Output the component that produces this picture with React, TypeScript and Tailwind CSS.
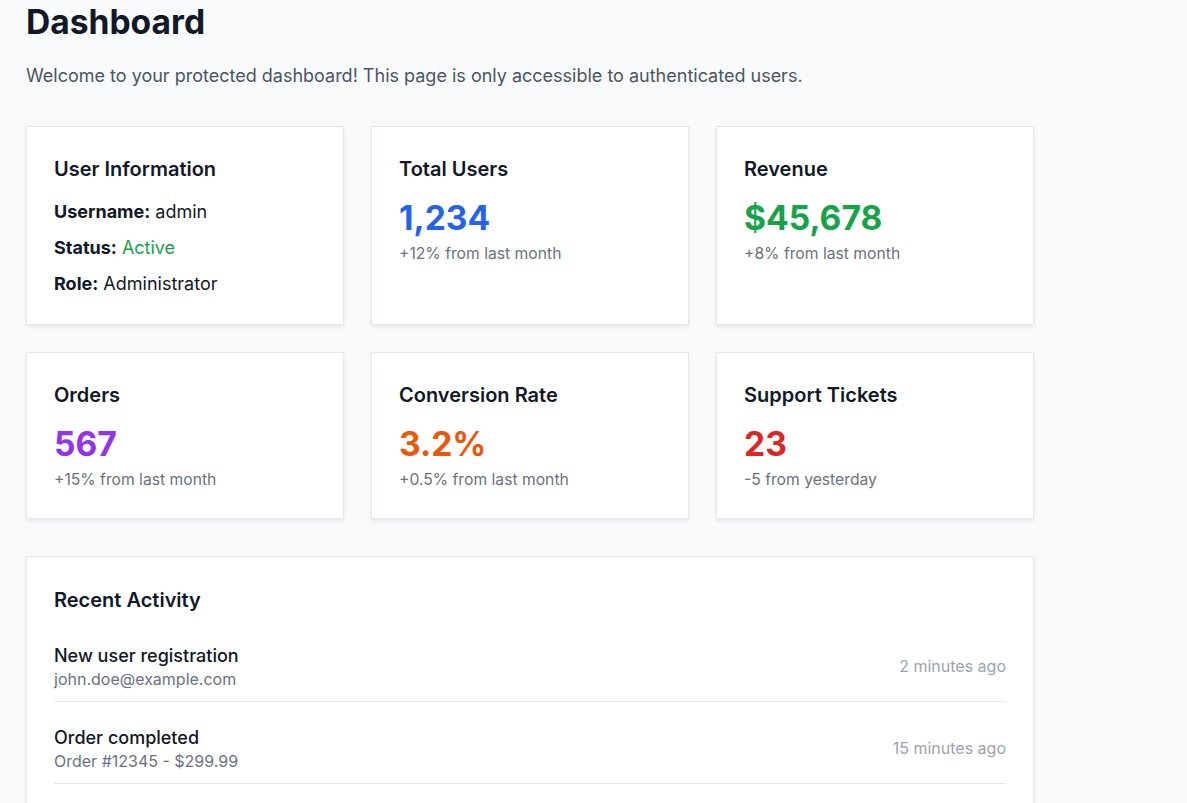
import React from "react";

type Stat = {
  title: string;
  value: string;
  note: string;
  color: string;
};

const topStats: Stat[] = [
  { title: "Total Users", value: "1,234", note: "+12% from last month", color: "text-[#2563eb]" },
  { title: "Revenue", value: "$45,678", note: "+8% from last month", color: "text-[#16a34a]" },
];

const bottomStats: Stat[] = [
  { title: "Orders", value: "567", note: "+15% from last month", color: "text-[#9333ea]" },
  { title: "Conversion Rate", value: "3.2%", note: "+0.5% from last month", color: "text-[#ea580c]" },
  { title: "Support Tickets", value: "23", note: "-5 from yesterday", color: "text-[#dc2626]" },
];

const activity = [
  { title: "New user registration", sub: "john.doe@example.com", time: "2 minutes ago" },
  { title: "Order completed", sub: "Order #12345 - $299.99", time: "15 minutes ago" },
];

const card = "bg-white border border-[#e5e7eb] shadow-[0_2px_4px_rgba(0,0,0,0.08)] p-[27px]";

const StatCard: React.FC<{ stat: Stat }> = ({ stat }) => (
  <div className={`${card} pb-[26px]`}>
    <h3 className="mt-[1px] text-[20px] leading-[28px] font-semibold text-[#111827]">{stat.title}</h3>
    <div className={`mt-[15px] text-[33.6px] leading-[40px] font-bold ${stat.color}`}>{stat.value}</div>
    <p className="mt-[4px] text-[15.7px] leading-[24px] text-[#6b7280]">{stat.note}</p>
  </div>
);

export default function App() {
  return (
    <div
      className="min-h-screen bg-[#f9fafb] px-[26px] pt-[2px] pb-10"
      style={{ fontFamily: "Inter, 'Noto Sans', sans-serif" }}
    >
      <div className="w-[1008px]">
        <h1 className="text-[33.6px] leading-[40px] font-bold text-[#111827]">Dashboard</h1>
        <p className="mt-[20px] text-[18px] leading-[28px] text-[#4b5563]">
          Welcome to your protected dashboard! This page is only accessible to authenticated users.
        </p>

        <div className="mt-[36px] grid grid-cols-3 gap-x-[27px] gap-y-[27px]">
          <div className={`${card} pb-[26px]`}>
            <h3 className="mt-[1px] text-[20px] leading-[28px] font-semibold text-[#111827]">User Information</h3>
            <div className="mt-[15px] flex flex-col gap-[8px] text-[18px] leading-[28px] text-[#111827]">
              <p>
                <span className="font-bold">Username:</span> admin
              </p>
              <p>
                <span className="font-bold">Status:</span> <span className="text-[#16a34a]">Active</span>
              </p>
              <p>
                <span className="font-bold">Role:</span> Administrator
              </p>
            </div>
          </div>
          {topStats.map((s) => (
            <StatCard key={s.title} stat={s} />
          ))}
          {bottomStats.map((s) => (
            <StatCard key={s.title} stat={s} />
          ))}
        </div>

        <div className={`mt-[37px] ${card}`}>
          <h3 className="mt-[2px] text-[20px] leading-[28px] font-semibold text-[#111827]">Recent Activity</h3>
          <div className="mt-[18px] flex flex-col gap-[12px]">
            {activity.map((a) => (
              <div
                key={a.title}
                className="flex items-center justify-between border-b border-[#e5e7eb] pt-[12px] pb-[10px]"
              >
                <div>
                  <p className="text-[18px] leading-[24px] font-medium text-[#111827]">{a.title}</p>
                  <p className="text-[16px] leading-[23px] text-[#6b7280]">{a.sub}</p>
                </div>
                <span className="mb-[4px] text-[16px] leading-[24px] text-[#9ca3af]">{a.time}</span>
              </div>
            ))}
          </div>
        </div>
      </div>
    </div>
  );
}
